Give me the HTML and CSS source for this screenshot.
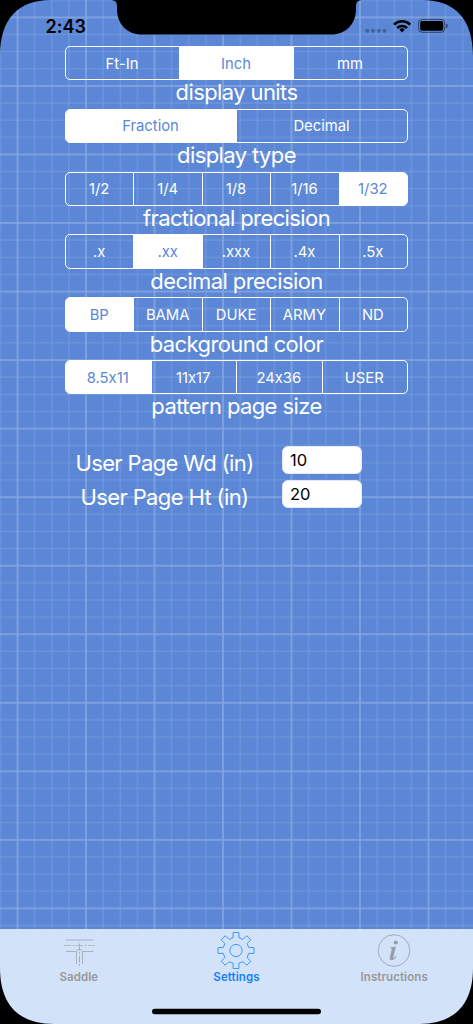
FILE: index.html
```
<!DOCTYPE html>
<html lang="en">
<head>
  <meta charset="UTF-8">
  <meta name="viewport" content="width=device-width, initial-scale=1.0">
  <title>Settings</title>
  <link rel="stylesheet" href="styles.css">
</head>
<body>
  <div class="screen">
    <!-- blueprint paper -->
    <svg class="paper" width="473" height="929">
      <defs>
        <pattern id="grid" x="17.5" y="17.4" width="68.5" height="68.54" patternUnits="userSpaceOnUse">
          <path class="minor" d="M17.1 0V68.54M34.25 0V68.54M51.4 0V68.54M0 17.1H68.5M0 34.25H68.5M0 51.4H68.5"/>
          <path class="major" d="M0 0V68.54M68.5 0V68.54M0 0H68.5M0 68.54H68.5"/>
        </pattern>
      </defs>
      <rect width="473" height="929" fill="url(#grid)"/>
    </svg>

    <header class="status">
      <span class="time">2:43</span>
      <svg class="signal" width="86" height="20" viewBox="364 16 86 20">
        <g fill="#000" fill-opacity=".27">
          <circle cx="367.3" cy="30.7" r="2"/><circle cx="373" cy="30.7" r="2"/>
          <circle cx="378.8" cy="30.7" r="2"/><circle cx="384.5" cy="30.7" r="2"/>
        </g>
        <g fill="none" stroke="#000" stroke-width="2.5">
          <path d="M394 24.7a11.5 11.5 0 0 1 16.2 0"/>
          <path d="M397.2 28a7 7 0 0 1 9.8 0"/>
        </g>
        <path d="M402.1 32.4l-2.7-2.8a3.9 3.9 0 0 1 5.4 0z"/>
        <rect x="418.6" y="19.4" width="26.2" height="12.9" rx="3.7" fill="none" stroke="#000" stroke-opacity=".5"/>
        <rect x="420.2" y="21" width="23" height="9.7" rx="2"/>
        <path d="M446.2 23.5q1.7.6 1.7 2.4t-1.7 2.4z" fill-opacity=".5"/>
      </svg>
    </header>

    <main class="settings">
      <div class="setting">
        <div class="segments">
          <button>Ft-In</button><button class="on">Inch</button><button>mm</button>
        </div>
        <h2>display units</h2>
      </div>
      <div class="setting">
        <div class="segments">
          <button class="on">Fraction</button><button>Decimal</button>
        </div>
        <h2>display type</h2>
      </div>
      <div class="setting">
        <div class="segments">
          <button>1/2</button><button>1/4</button><button>1/8</button><button>1/16</button><button class="on">1/32</button>
        </div>
        <h2>fractional precision</h2>
      </div>
      <div class="setting">
        <div class="segments">
          <button>.x</button><button class="on">.xx</button><button>.xxx</button><button>.4x</button><button>.5x</button>
        </div>
        <h2>decimal precision</h2>
      </div>
      <div class="setting">
        <div class="segments">
          <button class="on">BP</button><button>BAMA</button><button>DUKE</button><button>ARMY</button><button>ND</button>
        </div>
        <h2>background color</h2>
      </div>
      <div class="setting">
        <div class="segments">
          <button class="on">8.5x11</button><button>11x17</button><button>24x36</button><button>USER</button>
        </div>
        <h2>pattern page size</h2>
      </div>

      <div class="fields">
        <label for="pageWd">User Page Wd (in)</label>
        <input id="pageWd" type="text" value="10">
        <label for="pageHt">User Page Ht (in)</label>
        <input id="pageHt" type="text" value="20">
      </div>
    </main>

    <nav class="tabs">
      <a class="tab">
        <svg width="40" height="39" viewBox="59 931 40 39" fill="none" stroke="#a9b1bd">
          <path d="M66 940H93.5M66 951.5H76.5V964M93.5 951.5H82.5V964"/>
          <path d="M76.5 951.5L79.5 948.5L82.5 951.5"/>
          <path d="M64 945.5H95.5" stroke-dasharray="7 1.5 2 1.5" stroke-width=".8"/>
          <path d="M79.5 943.5V966" stroke-dasharray="7 1.5 2 1.5"/>
        </svg>
        <span>Saddle</span>
      </a>
      <a class="tab active">
        <svg width="40" height="39" viewBox="-20 -19.5 40 39" fill="none" stroke="#3c98fa" stroke-width="1">
          <circle r="6.1"/>
          <path d="M-2.9 -12.8V-18H2.9V-12.8L7 -11.1L10.7 -14.8L14.8 -10.7L11.1 -7L12.8 -2.9H18V2.9H12.8L11.1 7L14.8 10.7L10.7 14.8L7 11.1L2.9 12.8V18H-2.9V12.8L-7 11.1L-10.7 14.8L-14.8 10.7L-11.1 7L-12.8 2.9H-18V-2.9H-12.8L-11.1 -7L-14.8 -10.7L-10.7 -14.8L-7 -11.1Z"/>
        </svg>
        <span>Settings</span>
      </a>
      <a class="tab">
        <svg width="40" height="39" viewBox="-20 -19.5 40 39">
          <circle r="15.8" fill="none" stroke="#a5acb6"/>
          <circle cx="1.8" cy="-8" r="2.1" fill="#999fa8"/>
          <path d="M-3.8 -2.9L2 -4L-.7 6.7Q-1 8 .1 7.3L2 5.2L2.6 5.7Q0 9.6 -2.5 9.6Q-5 9.5 -4.2 6.4L-2.2 -1.5Q-2 -2.4 -3.8 -2.3Z" fill="#999fa8"/>
        </svg>
        <span>Instructions</span>
      </a>
    </nav>

    <!-- notch, rounded corners and home indicator -->
    <svg class="bezel" width="473" height="1024">
      <path d="M0 0H51C18 0 0 19 0 56ZM473 0H422C455 0 473 19 473 56ZM0 1024H54C19 1024 0 1005 0 968ZM473 1024H419C454 1024 473 1005 473 968Z"/>
      <path d="M110 0C115 0 117 2 117 6V9C117 24 127 34.5 142 34.5H331C346 34.5 356 24 356 9V6C356 2 358 0 363 0Z"/>
      <rect x="152" y="1008.7" width="169" height="5.6" rx="2.8"/>
    </svg>
  </div>
</body>
</html>
```
FILE: styles.css
```
* {
  box-sizing: border-box;
}
body {
  margin: 0;
  font-family: Inter, "Liberation Sans", sans-serif;
  /* keep the plain x between digits */
  font-feature-settings: "calt" 0;
}
.screen {
  position: relative;
  display: flex;
  flex-direction: column;
  width: 473px;
  height: 1024px;
  overflow: hidden;
  background-color: #5b87d6;
}
.paper, .bezel {
  position: absolute;
  top: 0;
  left: 0;
  pointer-events: none;
}
.paper path {
  fill: none;
}
.minor {
  stroke: #7097dc;
  stroke-width: 1.2;
}
.major {
  stroke: #87a7e1;
  stroke-width: 1.5;
}
.status {
  position: relative;
  display: flex;
  justify-content: space-between;
  height: 46px;
  padding: 16px 23px 0 45.5px;
}
.time {
  font-size: 18px;
  font-weight: 600;
  line-height: 21px;
}
.settings {
  position: relative;
  flex: 1;
  width: 343px;
  margin: 0 auto;
}
.setting {
  height: 62.8px;
}
.segments {
  display: flex;
  height: 34.4px;
  border: 1px solid #fff;
  border-radius: 5px;
  overflow: hidden;
}
.segments button {
  flex: 1 1 0;
  padding: 1px 1px 0 0;
  border: none;
  background: none;
  color: #fff;
  font-family: inherit;
  font-size: 14.8px;
  font-feature-settings: inherit;
}
.segments button:not(:last-child) {
  border-right: 1px solid #fff;
}
.segments .on {
  background-color: #fff;
  color: #5b87d6;
}
h2 {
  margin: 0;
  color: #fff;
  font-size: 22px;
  font-weight: 400;
  line-height: 25px;
  letter-spacing: -0.6px;
  text-align: center;
}
.fields {
  display: grid;
  grid-template-columns: 199px 80px;
  grid-auto-rows: 28px;
  column-gap: 18px;
  row-gap: 6px;
  margin-top: 23px;
}
.fields label {
  padding-top: 4px;
  color: #fff;
  font-size: 22px;
  line-height: 27px;
  letter-spacing: -0.63px;
  text-align: center;
  white-space: nowrap;
}
.fields input {
  height: 28px;
  padding: 0 7px;
  border: 1px solid #e4e8f0;
  border-radius: 6px;
  background-color: #fff;
  color: #000;
  font-family: inherit;
  font-size: 16.5px;
}
.tabs {
  position: relative;
  display: grid;
  grid-template-columns: repeat(3, 1fr);
  height: 95px;
  background-color: #d2e2f9;
}
.tab {
  display: flex;
  flex-direction: column;
  align-items: center;
  padding-top: 2px;
  color: #999;
  font-size: 11.5px;
  font-weight: 600;
  letter-spacing: 0.08px;
}
.tab svg {
  display: block;
}
.tab.active {
  color: #1681fb;
}
```
